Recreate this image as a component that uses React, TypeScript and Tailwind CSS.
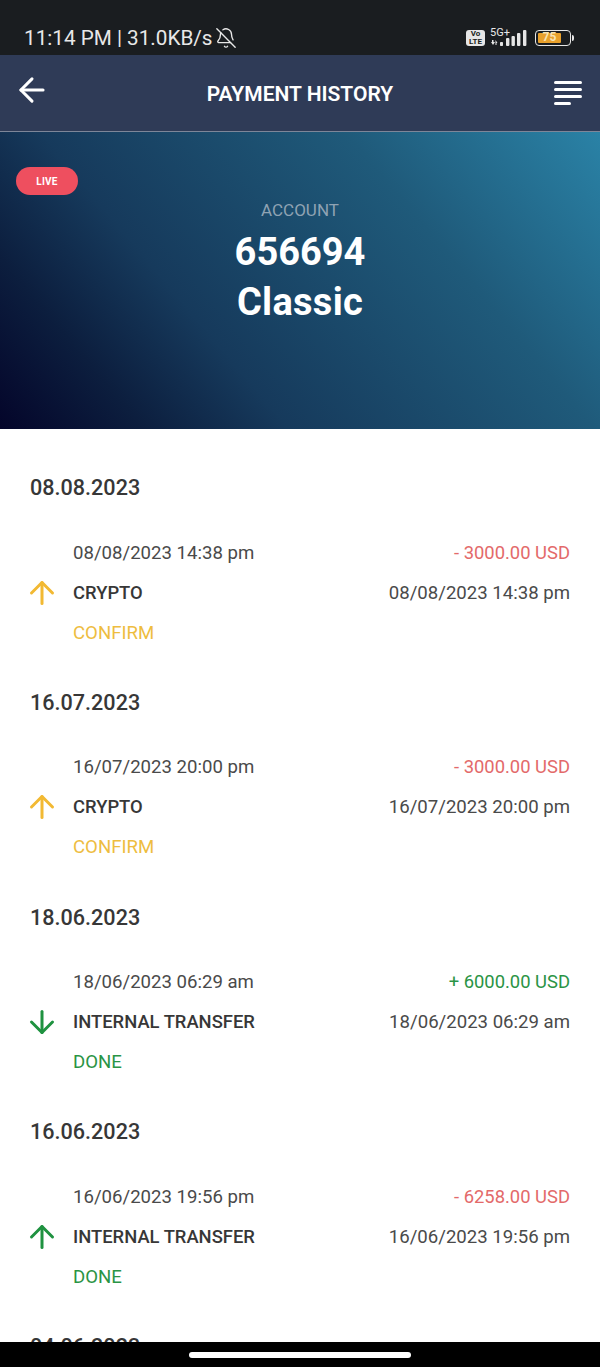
import { ArrowDown, ArrowLeft, ArrowUp, BellOff } from 'lucide-react';

type Payment = {
  heading: string;
  date: string;
  amount: string;
  method: string;
  status: string;
  direction: 'up' | 'down';
  negative: boolean;
  pending: boolean;
};

const payments: Payment[] = [
  { heading: '08.08.2023', date: '08/08/2023 14:38 pm', amount: '- 3000.00 USD', method: 'CRYPTO', status: 'CONFIRM', direction: 'up', negative: true, pending: true },
  { heading: '16.07.2023', date: '16/07/2023 20:00 pm', amount: '- 3000.00 USD', method: 'CRYPTO', status: 'CONFIRM', direction: 'up', negative: true, pending: true },
  { heading: '18.06.2023', date: '18/06/2023 06:29 am', amount: '+ 6000.00 USD', method: 'INTERNAL TRANSFER', status: 'DONE', direction: 'down', negative: false, pending: false },
  { heading: '16.06.2023', date: '16/06/2023 19:56 pm', amount: '- 6258.00 USD', method: 'INTERNAL TRANSFER', status: 'DONE', direction: 'up', negative: true, pending: false },
];

const StatusBar = () => (
  <div className="h-[55px] shrink-0 bg-[#1a1d20] pl-[24px] pr-[26px] pt-[24px] flex items-start justify-between text-[#e8e8e8]">
    <div className="flex items-center text-[20.7px] leading-[28px] font-['Roboto',sans-serif]">
      <span>11:14 PM | 31.0KB/s</span>
      <BellOff className="ml-[2px] h-[22px] w-[22px]" strokeWidth={1.5} />
    </div>
    <div className="flex items-start gap-[5px] pt-[4px]">
      <div className="mt-[2px] w-[19px] h-[16px] rounded-[3px] bg-[#e6e6e6] text-[#1a1d20] text-[8px] leading-[8px] font-bold text-center font-['Roboto',sans-serif]">
        Vo
        <br />
        LTE
      </div>
      <div className="relative w-[38px] h-[18px]">
        <span className="absolute left-0 top-[-2px] text-[11px] leading-[13px] font-['Roboto',sans-serif]">5G+</span>
        <svg viewBox="0 0 38 18" className="absolute inset-0 h-[18px] w-[38px]" fill="#e6e6e6">
          <path d="M2 12h1.5v2H5l-2 3-2-3h1zM5.5 17v-5l2 3H6.5v2z" />
          <rect x="10" y="14" width="3" height="4" rx="0.8" />
          <rect x="16" y="10" width="3.4" height="8" rx="1" />
          <rect x="21.5" y="8" width="3.4" height="10" rx="1" />
          <rect x="27" y="5" width="3.4" height="13" rx="1" />
          <rect x="33" y="2" width="3.4" height="16" rx="1" />
        </svg>
      </div>
      <div className="mt-[2px] ml-[2px] flex items-center">
        <div className="w-[36px] h-[16px] rounded-[4px] border-[1.5px] border-[#e6e6e6] p-[2px]">
          <div className="w-[23px] h-full rounded-[1px] bg-[#e8a02c] text-[12px] leading-[9px] font-bold text-[#f7e3b5] text-center font-['Roboto',sans-serif]">
            75
          </div>
        </div>
        <div className="ml-[1px] w-[2px] h-[6px] rounded-r-sm bg-[#e6e6e6]" />
      </div>
    </div>
  </div>
);

const Header = () => (
  <div className="h-[77px] shrink-0 bg-[#2f3b57] border-b border-[#7d8699] px-[18px] grid grid-cols-[1fr_auto_1fr] items-center text-white">
    <ArrowLeft className="ml-[-5px] h-[38px] w-[38px] mb-[6px]" strokeWidth={1.9} />
    <h1 className="mt-[4px] text-[21px] font-semibold font-['Roboto',sans-serif]">PAYMENT HISTORY</h1>
    <div className="flex flex-col gap-[4px] w-[28px] justify-self-end">
      <div className="h-[3px] rounded-full bg-white" />
      <div className="h-[3px] rounded-full bg-white" />
      <div className="h-[3px] rounded-full bg-white" />
      <div className="h-[3px] w-[17px] rounded-full bg-white" />
    </div>
  </div>
);

const Hero = () => (
  <div className="relative h-[297px] shrink-0 bg-[linear-gradient(50deg,#04052a_0%,#0c1e3e_17%,#163a5c_34%,#1f5a7a_70%,#2a82a6_100%)] pt-[67px] flex flex-col items-center font-['Roboto',sans-serif]">
    <span className="absolute left-[16px] top-[35px] flex h-[28px] w-[62px] items-center justify-center rounded-full bg-[#ee4f5f] text-[10px] font-bold tracking-wide text-white">
      LIVE
    </span>
    <div className="text-[17px] leading-[22px] text-[#8fa3b3]">ACCOUNT</div>
    <div className="mt-[6px] text-[38px] leading-[50px] font-bold text-white">656694</div>
    <div className="text-[38px] leading-[50px] font-bold text-white tracking-[0.3px]">Classic</div>
  </div>
);

const PaymentItem = ({ item }: { item: Payment }) => {
  const accent = item.pending ? 'text-[#eebd3f]' : 'text-[#2a9445]';
  return (
    <div className="h-[214.75px] shrink-0 px-[30px] pt-[45px]">
      <h2 className="text-[21.6px] leading-[28px] font-medium text-[#373737]">{item.heading}</h2>
      <div className="mt-[38.6px] flex justify-between pl-[43px] text-[18.6px] leading-[24px] text-[#4a4a4a]">
        <span>{item.date}</span>
        <span className={`text-[18.4px] ${item.negative ? 'text-[#e36a6a]' : 'text-[#2a9445]'}`}>{item.amount}</span>
      </div>
      <div className="relative mt-[16px] flex justify-between pl-[43px] text-[18.6px] leading-[24px] text-[#4a4a4a]">
        <span className="text-[18.4px] font-medium text-[#373737]">{item.method}</span>
        <span>{item.date}</span>
        <span className={`absolute left-[-6px] top-[-6px] ${item.pending ? 'text-[#f2b933]' : 'text-[#1f9240]'}`}>
          {item.direction === 'up' ? (
            <ArrowUp className="h-[36px] w-[36px]" strokeWidth={2} />
          ) : (
            <ArrowDown className="h-[36px] w-[36px]" strokeWidth={2} />
          )}
        </span>
      </div>
      <div className={`mt-[16px] pl-[43px] text-[18.6px] leading-[24px] ${accent}`}>{item.status}</div>
    </div>
  );
};

const App = () => {
  return (
    <div className="h-[1367px] w-[600px] overflow-hidden flex flex-col bg-white font-['Roboto',sans-serif]">
      <StatusBar />
      <Header />
      <Hero />
      <div className="flex-1 min-h-0 overflow-hidden">
        {payments.map((item) => (
          <PaymentItem key={item.heading} item={item} />
        ))}
        <div className="px-[30px] pt-[45px]">
          <h2 className="text-[21.6px] leading-[28px] font-medium text-[#373737]">04.06.2023</h2>
        </div>
      </div>
      <div className="h-[25px] shrink-0 bg-black flex items-center justify-center">
        <div className="h-[6px] w-[222px] rounded-full bg-white" />
      </div>
    </div>
  );
};

export default App;
